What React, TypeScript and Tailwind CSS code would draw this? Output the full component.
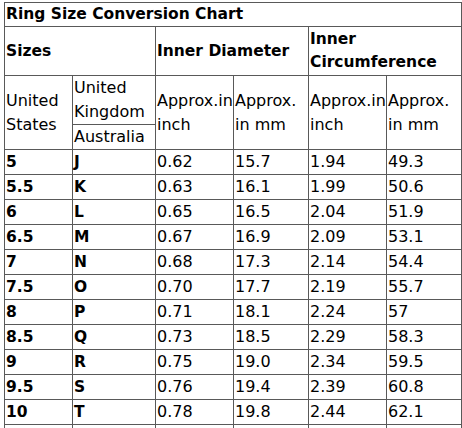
const rows: [string, string, string, string, string, string][] = [
  ['5', 'J', '0.62', '15.7', '1.94', '49.3'],
  ['5.5', 'K', '0.63', '16.1', '1.99', '50.6'],
  ['6', 'L', '0.65', '16.5', '2.04', '51.9'],
  ['6.5', 'M', '0.67', '16.9', '2.09', '53.1'],
  ['7', 'N', '0.68', '17.3', '2.14', '54.4'],
  ['7.5', 'O', '0.70', '17.7', '2.19', '55.7'],
  ['8', 'P', '0.71', '18.1', '2.24', '57'],
  ['8.5', 'Q', '0.73', '18.5', '2.29', '58.3'],
  ['9', 'R', '0.75', '19.0', '2.34', '59.5'],
  ['9.5', 'S', '0.76', '19.4', '2.39', '60.8'],
  ['10', 'T', '0.78', '19.8', '2.44', '62.1'],
];

const cell = 'border border-[#595959] px-[1px] py-0 align-middle text-left';
const bold = 'font-bold text-[15.5px] leading-[23px]';

export default function App() {
  return (
    <div className="h-[428px] overflow-hidden bg-white pl-[4px] pt-[2px] text-black font-['DejaVu_Sans',Verdana,sans-serif] text-[16px] leading-6">
      <table className="table-fixed border-collapse w-[457px]">
        <colgroup>
          <col className="w-[68px]" />
          <col className="w-[83px]" />
          <col className="w-[78px]" />
          <col className="w-[75px]" />
          <col className="w-[78px]" />
          <col className="w-[75px]" />
        </colgroup>
        <tbody>
          <tr className="h-[24px]">
            <td colSpan={6} className={`${cell} ${bold}`}>
              Ring Size Conversion Chart
            </td>
          </tr>
          <tr className="h-[49px]">
            <td colSpan={2} className={`${cell} ${bold}`}>
              Sizes
            </td>
            <td colSpan={2} className={`${cell} ${bold}`}>
              Inner Diameter
            </td>
            <td colSpan={2} className={`${cell} ${bold}`}>
              Inner Circumference
            </td>
          </tr>
          <tr className="h-[49px]">
            <td rowSpan={2} className={cell}>
              United States
            </td>
            <td className={cell}>United Kingdom</td>
            <td rowSpan={2} className={cell}>
              Approx.in inch
            </td>
            <td rowSpan={2} className={cell}>
              Approx. in mm
            </td>
            <td rowSpan={2} className={cell}>
              Approx.in inch
            </td>
            <td rowSpan={2} className={cell}>
              Approx. in mm
            </td>
          </tr>
          <tr className="h-[25px]">
            <td className={cell}>Australia</td>
          </tr>
          {rows.map((r) => (
            <tr key={r[0]} className="h-[25px]">
              <td className={`${cell} ${bold}`}>{r[0]}</td>
              <td className={`${cell} ${bold}`}>{r[1]}</td>
              <td className={cell}>{r[2]}</td>
              <td className={cell}>{r[3]}</td>
              <td className={cell}>{r[4]}</td>
              <td className={cell}>{r[5]}</td>
            </tr>
          ))}
          <tr className="h-[25px]">
            <td className={cell}>&nbsp;</td>
            <td className={cell}>&nbsp;</td>
            <td className={cell}>&nbsp;</td>
            <td className={cell}>&nbsp;</td>
            <td className={cell}>&nbsp;</td>
            <td className={cell}>&nbsp;</td>
          </tr>
        </tbody>
      </table>
    </div>
  );
}
